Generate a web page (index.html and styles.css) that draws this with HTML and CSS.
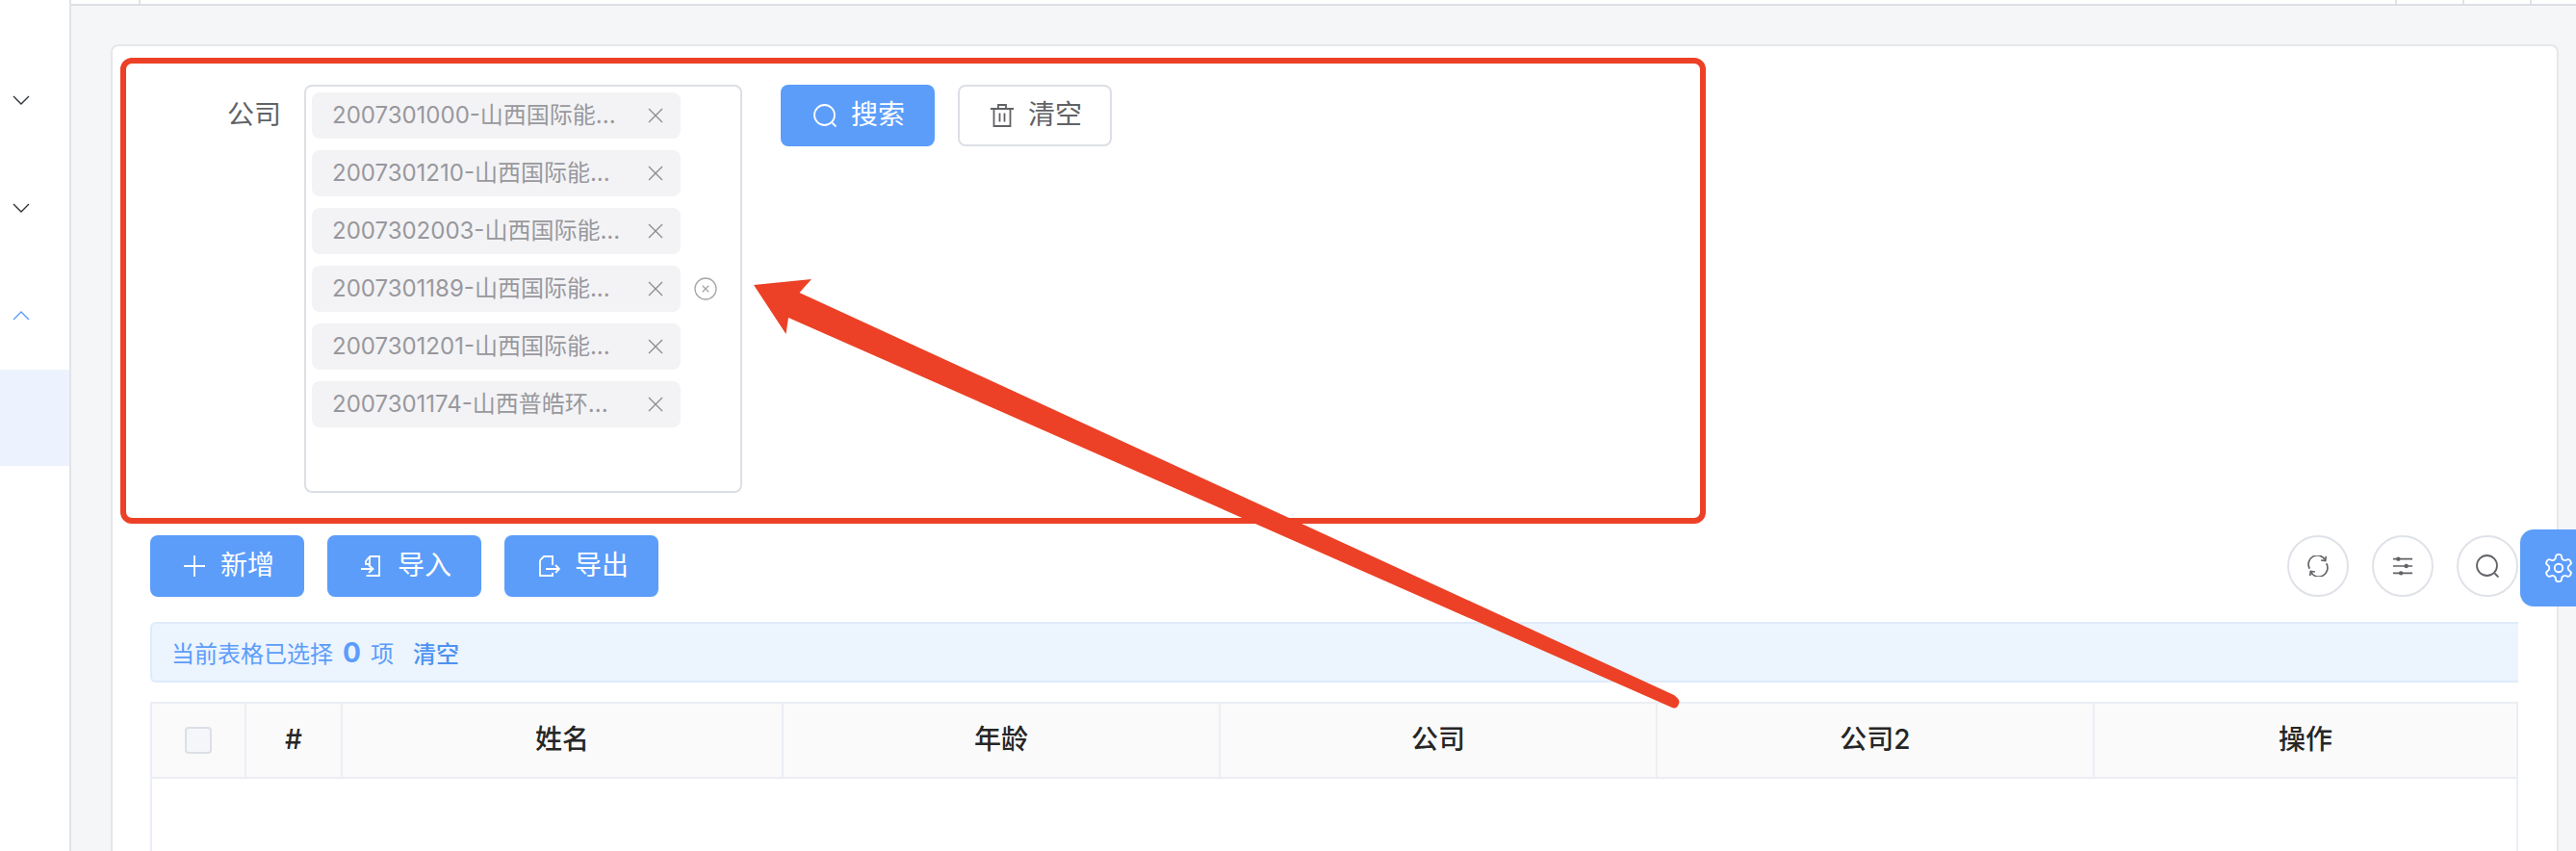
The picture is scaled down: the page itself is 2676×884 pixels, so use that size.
FILE: index.html
```html
<!DOCTYPE html>
<html lang="zh">
<head>
<meta charset="utf-8">
<title>公司</title>
<link rel="stylesheet" href="styles.css">
</head>
<body>
<div class="app">
  <aside class="sidebar">
    <div class="menu-row"><svg class="chev" viewBox="0 0 18 10"><path d="M1 1l8 8 8-8"/></svg></div>
    <div class="menu-row"><svg class="chev" viewBox="0 0 18 10"><path d="M1 1l8 8 8-8"/></svg></div>
    <div class="menu-row"><svg class="chev up" viewBox="0 0 18 10"><path d="M1 9l8-8 8 8"/></svg></div>
    <div class="menu-selected"></div>
  </aside>
  <main class="main">
    <div class="topbar">
      <div class="tb-cell tb-first"></div>
      <div class="tb-spacer"></div>
      <div class="tb-cell tb-end"></div>
      <div class="tb-cell tb-end"></div>
      <div class="tb-cell tb-end"></div>
      <div class="tb-last"></div>
    </div>
    <div class="content">
      <section class="card">
        <form class="search-form">
          <label class="form-label">公司</label>
          <div class="select">
            <div class="tag-row"><span class="tag"><span class="tag-text">2007301000-山西国际能...</span><svg class="tag-x" viewBox="0 0 16 16"><path d="M1 1l14 14M15 1L1 15"/></svg></span></div>
            <div class="tag-row"><span class="tag"><span class="tag-text">2007301210-山西国际能...</span><svg class="tag-x" viewBox="0 0 16 16"><path d="M1 1l14 14M15 1L1 15"/></svg></span></div>
            <div class="tag-row"><span class="tag"><span class="tag-text">2007302003-山西国际能...</span><svg class="tag-x" viewBox="0 0 16 16"><path d="M1 1l14 14M15 1L1 15"/></svg></span></div>
            <div class="tag-row"><span class="tag"><span class="tag-text">2007301189-山西国际能...</span><svg class="tag-x" viewBox="0 0 16 16"><path d="M1 1l14 14M15 1L1 15"/></svg></span>
              <svg class="clear-all" viewBox="0 0 24 24"><circle cx="12" cy="12" r="11"/><path d="M8.700 8.700l6.600 6.600M15.300 8.700l-6.600 6.600"/></svg></div>
            <div class="tag-row"><span class="tag"><span class="tag-text">2007301201-山西国际能...</span><svg class="tag-x" viewBox="0 0 16 16"><path d="M1 1l14 14M15 1L1 15"/></svg></span></div>
            <div class="tag-row"><span class="tag"><span class="tag-text">2007301174-山西普皓环...</span><svg class="tag-x" viewBox="0 0 16 16"><path d="M1 1l14 14M15 1L1 15"/></svg></span></div>
          </div>
          <div class="form-actions">
            <button type="button" class="btn btn-primary"><svg class="ico" viewBox="0 0 24 24"><circle cx="11.500" cy="11.500" r="10.500"/><path d="M19.500 19.500l4 4"/></svg><span class="btn-text">搜索</span></button>
            <button type="button" class="btn btn-default"><svg class="ico" viewBox="0 0 24 24"><path d="M0 5h24M8 5V1h8v4M3.500 5v18h17V5M9.500 9.500v9M14.500 9.500v9"/></svg><span class="btn-text">清空</span></button>
          </div>
        </form>
        <div class="toolbar">
          <div class="toolbar-left">
            <button type="button" class="btn btn-primary"><svg class="ico" viewBox="0 0 24 24"><path d="M12 1v22M1 12h22"/></svg><span class="btn-text">新增</span></button>
            <button type="button" class="btn btn-primary"><svg class="ico" viewBox="0 0 24 24"><path d="M10 2h10v20H6.500M10 2L6 7v3h4V2M1 15h12M9 11l4.500 4L9 19"/></svg><span class="btn-text">导入</span></button>
            <button type="button" class="btn btn-primary"><svg class="ico" viewBox="0 0 24 24"><path d="M3 6l4-4h9v9M16 19v3H3V6M9 15h14M19 11l4 4-4 4"/></svg><span class="btn-text">导出</span></button>
          </div>
          <div class="toolbar-right">
            <button type="button" class="round"><svg class="ico ico-sm" viewBox="0 0 24 24"><path d="M2.500 15A10 10 0 0 1 20 5M21.500 9A10 10 0 0 1 4 19"/><path d="M21 1l-.6 5-5-.6M3 23l.6-5 5 .6"/></svg></button>
            <button type="button" class="round"><svg class="ico ico-sm" viewBox="0 0 24 24"><path d="M1 4h22M1 12h22M1 20h22"/><circle class="dot" cx="7" cy="4" r="2.400"/><circle class="dot" cx="16" cy="12" r="2.400"/><circle class="dot" cx="10" cy="20" r="2.400"/></svg></button>
            <button type="button" class="round"><svg class="ico" viewBox="0 0 24 24"><circle cx="11.500" cy="11.500" r="10.500"/><path d="M19.500 19.500l4 4"/></svg></button>
          </div>
        </div>
        <div class="alert">
          <span>当前表格已选择</span><strong class="count">0</strong><span>项</span><a class="alert-link">清空</a>
        </div>
        <div class="table">
          <div class="thead">
            <div class="th"><span class="checkbox"></span></div>
            <div class="th"><span class="th-text">#</span></div>
            <div class="th"><span class="th-text">姓名</span></div>
            <div class="th"><span class="th-text">年龄</span></div>
            <div class="th"><span class="th-text">公司</span></div>
            <div class="th"><span class="th-text">公司2</span></div>
            <div class="th"><span class="th-text">操作</span></div>
          </div>
        </div>
      </section>
    </div>
  </main>
  <div class="gear-tab">
    <svg class="gear" viewBox="0 0 24 24"><path d="M12.220 2h-.44a2 2 0 0 0-2 2v.18a2 2 0 0 1-1 1.730l-.43.25a2 2 0 0 1-2 0l-.15-.08a2 2 0 0 0-2.730.73l-.22.38a2 2 0 0 0 .73 2.730l.15.1a2 2 0 0 1 1 1.720v.51a2 2 0 0 1-1 1.740l-.15.09a2 2 0 0 0-.73 2.730l.22.38a2 2 0 0 0 2.730.73l.15-.08a2 2 0 0 1 2 0l.43.25a2 2 0 0 1 1 1.730V20a2 2 0 0 0 2 2h.44a2 2 0 0 0 2-2v-.18a2 2 0 0 1 1-1.730l.43-.25a2 2 0 0 1 2 0l.15.08a2 2 0 0 0 2.730-.73l.22-.39a2 2 0 0 0-.73-2.730l-.15-.08a2 2 0 0 1-1-1.740v-.5a2 2 0 0 1 1-1.740l.15-.09a2 2 0 0 0 .73-2.730l-.22-.38a2 2 0 0 0-2.730-.73l-.15.08a2 2 0 0 1-2 0l-.43-.25a2 2 0 0 1-1-1.730V4a2 2 0 0 0-2-2z"/><circle cx="12" cy="12" r="3"/></svg>
  </div>
  <svg class="annotation" viewBox="0 0 2676 884">
    <rect class="anno-box" x="128" y="63" width="1641" height="478" rx="9"/>
    <path class="anno-arrow" d="M783 296L843 290L830.500 304L1739 722Q1746 727 1744 731Q1742 737 1737 735L819 330L816.500 347Z"/>
  </svg>
</div>
</body>
</html>
```
FILE: styles.css
```css
* { box-sizing: border-box; }
html, body { margin: 0; padding: 0; background: #f5f6f8; }
body {
  font-family: Inter, "Noto Sans CJK SC", sans-serif;
  font-size: 28px;
  color: #606266;
}
.app { position: relative; display: flex; width: 2676px; height: 884px; overflow: hidden; }

.sidebar {
  flex: 0 0 74px;
  background: #fff;
  border-right: 2px solid #e2e3e8;
  padding-top: 48px;
  display: flex;
  flex-direction: column;
}
.menu-row { height: 112px; display: flex; align-items: center; padding-left: 13px; }
.chev { width: 18px; height: 10px; fill: none; stroke: #2f3338; stroke-width: 1.400; }
.chev.up { stroke: #5c9dfa; }
.menu-selected { height: 100px; background: #ecf3fe; }

.main { flex: 1; display: flex; flex-direction: column; min-width: 0; }
.topbar { display: flex; height: 6px; background: #fff; border-bottom: 2px solid #dcdee5; }
.tb-cell { border-right: 2px solid #e2e3e8; }
.tb-first { width: 72px; }
.tb-spacer { flex: 1; }
.tb-end { width: 70px; }
.tb-last { width: 46px; }

.content { flex: 1; padding: 40px 18px 0 41px; min-height: 0; }
.card {
  height: 100%;
  background: #fff;
  border: 2px solid #e5e6eb;
  border-bottom: 0;
  border-radius: 8px 8px 0 0;
  padding: 40px 40px 0 39px;
  display: flex;
  flex-direction: column;
}

.search-form { display: flex; align-items: flex-start; }
.form-label { width: 136px; margin-right: 24px; text-align: right; line-height: 62px; }
.select {
  width: 455px;
  height: 424px;
  border: 2px solid #dcdfe6;
  border-radius: 8px;
  padding: 6px 6px;
  display: flex;
  flex-direction: column;
  gap: 12px;
}
.tag-row { display: flex; align-items: center; gap: 14px; }
.tag {
  width: 383px;
  height: 48px;
  background: #f3f3f5;
  border-radius: 8px;
  padding: 0 18px 0 21px;
  display: flex;
  align-items: center;
  justify-content: space-between;
}
.tag-text { font-size: 24px; line-height: 28px; color: #98989d; white-space: nowrap; }
.tag-x { width: 16px; height: 16px; fill: none; stroke: #8a8a90; stroke-width: 1.300; }
.clear-all { width: 24px; height: 24px; fill: none; stroke: #a5a6ab; stroke-width: 1.300; }

.form-actions { display: flex; gap: 24px; margin-left: 40px; }
.btn {
  width: 160px;
  height: 64px;
  border-radius: 8px;
  border: 2px solid transparent;
  font: inherit;
  font-size: 28px;
  display: flex;
  align-items: center;
  justify-content: center;
  gap: 15px;
  padding: 0 0 0 3px;
}
.btn-text { line-height: 36px; padding-bottom: 2px; }
.btn-primary { background: #5c9dfa; color: #fff; }
.btn-default { background: #fff; color: #606266; border-color: #dcdfe6; }
.ico { width: 24px; height: 24px; fill: none; stroke: currentColor; stroke-width: 1.800; flex: none; }
.ico-sm { width: 22px; height: 22px; }
.dot { fill: currentColor; stroke: none; }

.toolbar { display: flex; justify-content: space-between; margin-top: 44px; }
.toolbar-left { display: flex; gap: 24px; }
.toolbar-right { display: flex; gap: 24px; }
.round {
  width: 64px;
  height: 64px;
  border-radius: 50%;
  border: 2px solid #dfe2e8;
  background: #fff;
  color: #606266;
  display: flex;
  align-items: center;
  justify-content: center;
  padding: 0;
}

.alert {
  margin-top: 26px;
  height: 63px;
  background: #ecf4fe;
  border: 2px solid #deebfb;
  border-right: 0;
  border-radius: 6px 0 0 6px;
  padding-left: 20px;
  display: flex;
  align-items: center;
  font-size: 24px;
  color: #5c9dfa;
}
.count { font-size: 28px; font-weight: 700; margin: 0 10px; }
.alert-link { margin-left: 20px; font-weight: 500; color: #4d92f0; }

.table {
  margin-top: 20px;
  flex: 1;
  border: 2px solid #ebeef5;
  border-bottom: 0;
}
.thead {
  display: grid;
  grid-template-columns: 98px 100px 458px 454px 454px 454px 1fr;
  height: 78px;
  background: #fafafa;
  border-bottom: 2px solid #ebeef5;
}
.th {
  display: flex;
  align-items: center;
  justify-content: center;
  border-right: 2px solid #ebeef5;
  font-weight: 500;
  color: #262626;
}
.th-text { line-height: 36px; padding-bottom: 2px; }
.th:last-child { border-right: 0; }
.checkbox {
  width: 28px;
  height: 28px;
  border: 2px solid #dcdfe6;
  border-radius: 4px;
  background: #f5f6fa;
}

.gear-tab {
  position: absolute;
  left: 2618px;
  top: 550px;
  width: 58px;
  height: 80px;
  background: #5c9dfa;
  border-radius: 14px 0 0 14px;
  display: flex;
  align-items: center;
  padding-left: 23px;
}
.gear { width: 34px; height: 34px; fill: none; stroke: #fff; stroke-width: 1.300; flex: none; }

.annotation { position: absolute; left: 0; top: 0; width: 2676px; height: 884px; pointer-events: none; }
.anno-box { fill: none; stroke: #ec4126; stroke-width: 6; }
.anno-arrow { fill: #ec4126; }
```
